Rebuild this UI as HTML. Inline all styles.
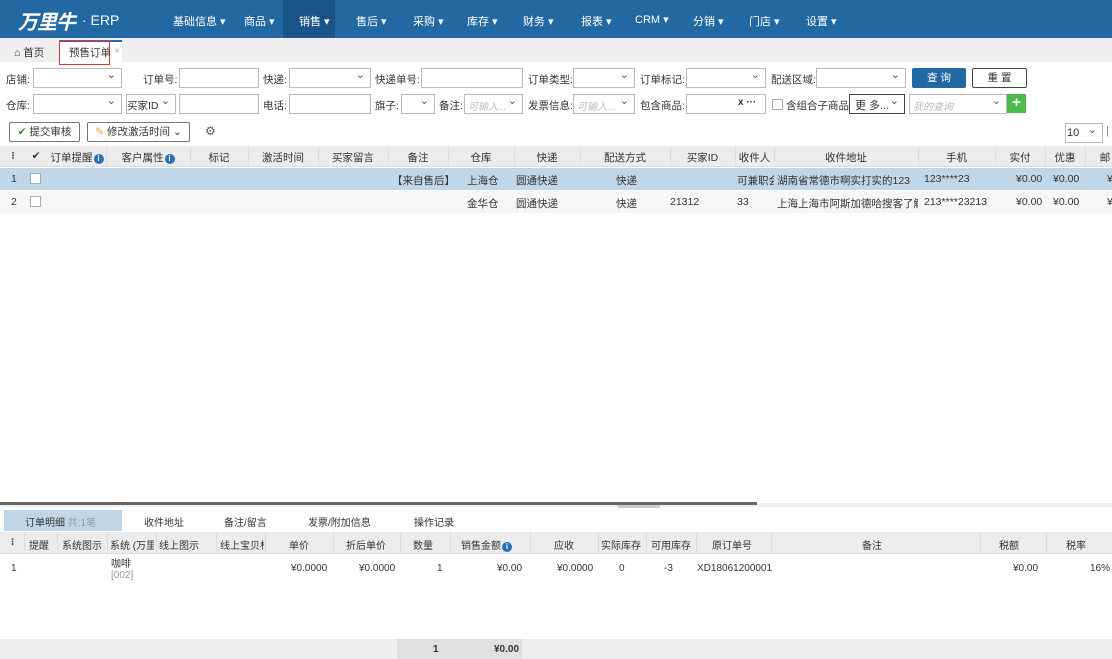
<!DOCTYPE html>
<html><head><meta charset="utf-8"><style>
*{box-sizing:border-box;margin:0;padding:0}
body{width:1112px;height:659px;overflow:hidden;background:#fff;font-family:"Liberation Sans","Noto Sans CJK SC",sans-serif;font-size:11px;color:#333;position:relative}
.a{position:absolute;white-space:nowrap}
.nav{left:0;top:0;width:1112px;height:38px;background:#2268a3}
.nav .i{position:absolute;top:13px;color:#fff;font-size:11px}
.inp{position:absolute;height:20px;border:1px solid #bbb;background:#fff}
.sel:after{content:"⌄";position:absolute;right:5px;top:-1px;font-size:11px;color:#555}
.lb{position:absolute;font-size:10.5px;color:#333}
.ph{color:#bbb;font-style:italic;font-size:10px;position:absolute;left:3px;top:3px}
.btn{position:absolute;height:20px;border:1px solid #888;border-radius:2px;background:#fff;font-size:10.5px;text-align:center;line-height:18px}
.hd{position:absolute;background:#ececec;border-bottom:1px solid #ddd}
.c{position:absolute;text-align:center;font-size:10.5px}
.vl{position:absolute;width:1px;background:#ddd}
.info{display:inline-block;width:10px;height:10px;border-radius:50%;background:#2a6fb5;color:#fff;font-size:8px;line-height:10px;text-align:center;font-weight:bold;vertical-align:0;margin-left:1px}
.cb{position:absolute;width:11px;height:11px;border:1px solid #aaa;background:#fff}
</style></head><body>
<div class="a nav">
<div class="a" style="left:18px;top:6px;color:#fff;font-size:20px;font-style:italic;font-weight:bold;letter-spacing:-1px">万里牛</div>
<div class="a" style="left:82px;top:12px;color:#fff;font-size:14px">· ERP</div>
<div class="a" style="left:283px;top:0;width:52px;height:38px;background:#1b5587"></div>
<span class="i" style="left:173px">基础信息 ▾</span>
<span class="i" style="left:244px">商品 ▾</span>
<span class="i" style="left:299px">销售 ▾</span>
<span class="i" style="left:356px">售后 ▾</span>
<span class="i" style="left:413px">采购 ▾</span>
<span class="i" style="left:467px">库存 ▾</span>
<span class="i" style="left:523px">财务 ▾</span>
<span class="i" style="left:581px">报表 ▾</span>
<span class="i" style="left:635px">CRM ▾</span>
<span class="i" style="left:693px">分销 ▾</span>
<span class="i" style="left:749px">门店 ▾</span>
<span class="i" style="left:806px">设置 ▾</span>
</div>
<div class="a" style="left:0;top:38px;width:1112px;height:24px;background:#efefef"></div>
<div class="a" style="left:14px;top:45px;font-size:10.5px">⌂ 首页</div>
<div class="a" style="left:60px;top:40px;width:62px;height:22px;background:#fff;border-top:2px solid #2268a3"></div>
<div class="a" style="left:59px;top:40px;width:51px;height:25px;border:1.5px solid #d9373c"></div>
<div class="a" style="left:69px;top:45px;font-size:10.5px">预售订单</div>
<div class="a" style="left:114px;top:46px;color:#aaa;font-size:10px">×</div>

<span class="lb" style="left:6px;top:72px">店铺:</span>
<div class="inp sel" style="left:33px;top:68px;width:89px"></div>
<span class="lb" style="left:143px;top:72px">订单号:</span>
<div class="inp" style="left:179px;top:68px;width:80px"></div>
<span class="lb" style="left:263px;top:72px">快递:</span>
<div class="inp sel" style="left:289px;top:68px;width:82px"></div>
<span class="lb" style="left:375px;top:72px">快递单号:</span>
<div class="inp" style="left:421px;top:68px;width:102px"></div>
<span class="lb" style="left:528px;top:72px">订单类型:</span>
<div class="inp sel" style="left:573px;top:68px;width:62px"></div>
<span class="lb" style="left:640px;top:72px">订单标记:</span>
<div class="inp sel" style="left:686px;top:68px;width:80px"></div>
<span class="lb" style="left:771px;top:72px">配送区域:</span>
<div class="inp sel" style="left:816px;top:68px;width:90px"></div>
<div class="btn" style="left:912px;top:68px;width:54px;background:#2268a3;color:#fff;border-color:#2268a3">查 询</div>
<div class="btn" style="left:972px;top:68px;width:55px;border-color:#444">重 置</div>

<span class="lb" style="left:6px;top:98px">仓库:</span>
<div class="inp sel" style="left:33px;top:94px;width:89px"></div>
<div class="inp sel" style="left:126px;top:94px;width:50px"><span style="position:absolute;left:0;top:3px;font-size:10.5px">买家ID</span></div>
<div class="inp" style="left:179px;top:94px;width:80px"></div>
<span class="lb" style="left:263px;top:98px">电话:</span>
<div class="inp" style="left:289px;top:94px;width:82px"></div>
<span class="lb" style="left:375px;top:98px">旗子:</span>
<div class="inp sel" style="left:401px;top:94px;width:34px"></div>
<span class="lb" style="left:439px;top:98px">备注:</span>
<div class="inp sel" style="left:464px;top:94px;width:59px"><span class="ph">可输入...</span></div>
<span class="lb" style="left:528px;top:98px">发票信息:</span>
<div class="inp sel" style="left:573px;top:94px;width:62px"><span class="ph">可输入...</span></div>
<span class="lb" style="left:640px;top:98px">包含商品:</span>
<div class="inp" style="left:686px;top:94px;width:80px"><span style="position:absolute;left:51px;top:2px;font-weight:bold;font-size:10px">x ···</span></div>
<div class="cb" style="left:772px;top:99px"></div>
<span class="lb" style="left:786px;top:98px">含组合子商品</span>
<div class="inp sel" style="left:849px;top:94px;width:56px;border-color:#444"><span style="position:absolute;left:5px;top:2px">更 多...</span></div>
<div class="inp sel" style="left:909px;top:94px;width:98px"><span class="ph">我的查询</span></div>
<div class="a" style="left:1007px;top:94px;width:19px;height:19px;background:#4cba4c;color:#fff;font-weight:bold;font-size:15px;text-align:center;line-height:18px">+</div>

<div class="btn" style="left:9px;top:122px;width:71px;border-color:#777"><span style="color:#2a8a3a">✔</span> 提交审核</div>
<div class="btn" style="left:87px;top:122px;width:103px;border-color:#777"><span style="color:#e8a030">✎</span> 修改激活时间 ⌄</div>
<div class="a" style="left:205px;top:124px;color:#555;font-size:12px">⚙</div>
<div class="inp sel" style="left:1065px;top:123px;width:38px"><span style="position:absolute;left:1px;top:3px">10</span></div>
<div class="a" style="left:1106px;top:125px;color:#888">|</div>

<div class="hd" style="left:0;top:146px;width:1112px;height:21px"></div>
<div class="c" style="left:0;top:150px;width:26px;font-weight:bold">⁝</div>
<div class="c" style="left:26px;top:150px;width:20px">✔</div>
<div class="c" style="left:46px;top:150px;width:62px">订单提醒<span class="info">i</span></div>
<div class="c" style="left:106px;top:150px;width:84px">客户属性<span class="info">i</span></div>
<div class="c" style="left:190px;top:150px;width:58px">标记</div>
<div class="c" style="left:248px;top:150px;width:70px">激活时间</div>
<div class="c" style="left:318px;top:150px;width:70px">买家留言</div>
<div class="c" style="left:388px;top:150px;width:60px">备注</div>
<div class="c" style="left:448px;top:150px;width:66px">仓库</div>
<div class="c" style="left:514px;top:150px;width:66px">快递</div>
<div class="c" style="left:580px;top:150px;width:90px">配送方式</div>
<div class="c" style="left:670px;top:150px;width:65px">买家ID</div>
<div class="c" style="left:735px;top:150px;width:39px">收件人</div>
<div class="c" style="left:774px;top:150px;width:144px">收件地址</div>
<div class="c" style="left:918px;top:150px;width:77px">手机</div>
<div class="c" style="left:995px;top:150px;width:50px">实付</div>
<div class="c" style="left:1045px;top:150px;width:40px">优惠</div>
<div class="c" style="left:1085px;top:150px;width:40px">邮</div>
<div class="vl" style="left:106px;top:146px;height:21px"></div>
<div class="vl" style="left:190px;top:146px;height:21px"></div>
<div class="vl" style="left:248px;top:146px;height:21px"></div>
<div class="vl" style="left:318px;top:146px;height:21px"></div>
<div class="vl" style="left:388px;top:146px;height:21px"></div>
<div class="vl" style="left:448px;top:146px;height:21px"></div>
<div class="vl" style="left:514px;top:146px;height:21px"></div>
<div class="vl" style="left:580px;top:146px;height:21px"></div>
<div class="vl" style="left:670px;top:146px;height:21px"></div>
<div class="vl" style="left:735px;top:146px;height:21px"></div>
<div class="vl" style="left:774px;top:146px;height:21px"></div>
<div class="vl" style="left:918px;top:146px;height:21px"></div>
<div class="vl" style="left:995px;top:146px;height:21px"></div>
<div class="vl" style="left:1045px;top:146px;height:21px"></div>
<div class="vl" style="left:1085px;top:146px;height:21px"></div>

<div class="a" style="left:0;top:168px;width:1112px;height:22px;background:#bfd7e9"></div>
<div class="a" style="left:0;top:191px;width:1112px;height:22px;background:#f6f6f6"></div>
<div class="a" style="left:11px;top:173px;font-size:10.5px">1</div>
<div class="cb" style="left:30px;top:173px"></div>
<div class="a" style="left:392px;top:173px;font-size:10.5px">【来自售后】</div>
<div class="a" style="left:467px;top:173px;font-size:10.5px">上海仓</div>
<div class="a" style="left:516px;top:173px;font-size:10.5px">圆通快递</div>
<div class="a" style="left:616px;top:173px;font-size:10.5px">快递</div>
<div class="a" style="left:737px;top:173px;font-size:10.5px;width:37px;overflow:hidden">可兼职会</div>
<div class="a" style="left:777px;top:173px;font-size:10.5px">湖南省常德市啊实打实的123</div>
<div class="a" style="left:924px;top:173px;font-size:10.5px">123****23</div>
<div class="a" style="left:1016px;top:173px;font-size:10.5px">¥0.00</div>
<div class="a" style="left:1053px;top:173px;font-size:10.5px">¥0.00</div>
<div class="a" style="left:1107px;top:173px;font-size:10.5px">¥</div>

<div class="a" style="left:11px;top:196px;font-size:10.5px">2</div>
<div class="cb" style="left:30px;top:196px"></div>
<div class="a" style="left:467px;top:196px;font-size:10.5px">金华仓</div>
<div class="a" style="left:516px;top:196px;font-size:10.5px">圆通快递</div>
<div class="a" style="left:616px;top:196px;font-size:10.5px">快递</div>
<div class="a" style="left:670px;top:196px;font-size:10.5px">21312</div>
<div class="a" style="left:737px;top:196px;font-size:10.5px">33</div>
<div class="a" style="left:777px;top:196px;font-size:10.5px;width:141px;overflow:hidden">上海上海市阿斯加德哈搜客了解的</div>
<div class="a" style="left:924px;top:196px;font-size:10.5px">213****23213</div>
<div class="a" style="left:1016px;top:196px;font-size:10.5px">¥0.00</div>
<div class="a" style="left:1053px;top:196px;font-size:10.5px">¥0.00</div>
<div class="a" style="left:1107px;top:196px;font-size:10.5px">¥</div>

<div class="a" style="left:0;top:503px;width:1112px;height:4px;background:#eee"></div>
<div class="a" style="left:0;top:502px;width:757px;height:3px;background:#666"></div>
<div class="a" style="left:618px;top:505px;width:42px;height:3px;background:#ccc"></div>

<div class="a" style="left:4px;top:510px;width:118px;height:21px;background:#bfd7e9"></div>
<div class="a" style="left:25px;top:514px;font-size:10px">订单明细 <span style="color:#999">共:1笔</span></div>
<div class="a" style="left:144px;top:514px;font-size:10px">收件地址</div>
<div class="a" style="left:224px;top:514px;font-size:10px">备注/留言</div>
<div class="a" style="left:308px;top:514px;font-size:10px">发票/附加信息</div>
<div class="a" style="left:414px;top:514px;font-size:10px">操作记录</div>

<div class="hd" style="left:0;top:532px;width:1112px;height:22px"></div>
<div style="font-size:10px">
<div class="a" style="left:11px;top:537px;font-weight:bold">⁝</div>
<div class="a" style="left:29px;top:537px">提醒</div>
<div class="a" style="left:62px;top:537px">系统图示</div>
<div class="a" style="left:110px;top:537px;width:44px;overflow:hidden">系统 (万里牛)</div>
<div class="a" style="left:159px;top:537px">线上图示</div>
<div class="a" style="left:220px;top:537px;width:44px;overflow:hidden">线上宝贝标题</div>
<div class="a" style="left:289px;top:537px">单价</div>
<div class="a" style="left:346px;top:537px">折后单价</div>
<div class="a" style="left:413px;top:537px">数量</div>
<div class="a" style="left:461px;top:537px">销售金额<span class="info">i</span></div>
<div class="a" style="left:554px;top:537px">应收</div>
<div class="a" style="left:601px;top:537px">实际库存</div>
<div class="a" style="left:651px;top:537px">可用库存</div>
<div class="a" style="left:712px;top:537px">原订单号</div>
<div class="a" style="left:862px;top:537px">备注</div>
<div class="a" style="left:999px;top:537px">税额</div>
<div class="a" style="left:1066px;top:537px">税率</div>
</div>
<div class="vl" style="left:24px;top:532px;height:22px"></div>
<div class="vl" style="left:57px;top:532px;height:22px"></div>
<div class="vl" style="left:107px;top:532px;height:22px"></div>
<div class="vl" style="left:156px;top:532px;height:22px"></div>
<div class="vl" style="left:216px;top:532px;height:22px"></div>
<div class="vl" style="left:265px;top:532px;height:22px"></div>
<div class="vl" style="left:333px;top:532px;height:22px"></div>
<div class="vl" style="left:400px;top:532px;height:22px"></div>
<div class="vl" style="left:450px;top:532px;height:22px"></div>
<div class="vl" style="left:530px;top:532px;height:22px"></div>
<div class="vl" style="left:598px;top:532px;height:22px"></div>
<div class="vl" style="left:646px;top:532px;height:22px"></div>
<div class="vl" style="left:696px;top:532px;height:22px"></div>
<div class="vl" style="left:771px;top:532px;height:22px"></div>
<div class="vl" style="left:980px;top:532px;height:22px"></div>
<div class="vl" style="left:1046px;top:532px;height:22px"></div>

<div style="font-size:10px">
<div class="a" style="left:11px;top:563px">1</div>
<div class="a" style="left:111px;top:555px">咖啡</div>
<div class="a" style="left:111px;top:570px;color:#999">[002]</div>
<div class="a" style="left:291px;top:563px">¥0.0000</div>
<div class="a" style="left:359px;top:563px">¥0.0000</div>
<div class="a" style="left:437px;top:563px">1</div>
<div class="a" style="left:497px;top:563px">¥0.00</div>
<div class="a" style="left:557px;top:563px">¥0.0000</div>
<div class="a" style="left:619px;top:563px">0</div>
<div class="a" style="left:664px;top:563px">-3</div>
<div class="a" style="left:697px;top:563px">XD18061200001</div>
<div class="a" style="left:1013px;top:563px">¥0.00</div>
<div class="a" style="left:1090px;top:563px">16%</div>
</div>

<div class="a" style="left:0;top:639px;width:1112px;height:20px;background:#eee"></div>
<div class="a" style="left:397px;top:639px;width:125px;height:20px;background:#e0e0e0"></div>
<div class="a" style="left:433px;top:644px;font-size:10px;font-weight:bold">1</div>
<div class="a" style="left:494px;top:644px;font-size:10px;font-weight:bold">¥0.00</div>
</body></html>
